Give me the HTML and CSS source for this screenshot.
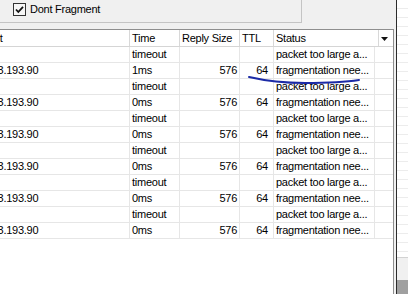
FILE: index.html
```html
<!DOCTYPE html>
<html lang="en">
<head>
    <meta charset="UTF-8">
    <title>Ping</title>
    <link rel="stylesheet" href="styles.css">
</head>
<body>

    <div class="screen">
        <div class="window">

            <!-- Options group -->
            <div class="group">
                <label class="check">
                    <span class="box">
                        <svg width="11" height="11" viewBox="0 0 11 11"><path d="M2 5.5 L4.3 8 L9 2.8" fill="none" stroke="#111" stroke-width="1.8"/></svg>
                    </span>
                    Dont Fragment
                </label>
            </div>

            <!-- Results list -->
            <div class="list">
                <div class="head">
                    <div class="hcell host">Host</div>
                    <div class="hcell">Time</div>
                    <div class="hcell">Reply Size</div>
                    <div class="hcell">TTL</div>
                    <div class="hcell">Status</div>
                    <div class="hcell menu">
                        <svg width="7" height="4" viewBox="0 0 7 4"><polygon points="0,0 7,0 3.5,4" fill="#111"/></svg>
                    </div>
                </div>

                <div class="row"><div class="cell"></div><div class="cell">timeout</div><div class="cell num"></div><div class="cell ttl"></div><div class="cell">packet too large a...</div><div class="cell"></div></div>
                <div class="row"><div class="cell">10.3.193.90</div><div class="cell">1ms</div><div class="cell num">576</div><div class="cell ttl">64</div><div class="cell">fragmentation nee...</div><div class="cell"></div></div>
                <div class="row"><div class="cell"></div><div class="cell">timeout</div><div class="cell num"></div><div class="cell ttl"></div><div class="cell">packet too large a...</div><div class="cell"></div></div>
                <div class="row"><div class="cell">10.3.193.90</div><div class="cell">0ms</div><div class="cell num">576</div><div class="cell ttl">64</div><div class="cell">fragmentation nee...</div><div class="cell"></div></div>
                <div class="row"><div class="cell"></div><div class="cell">timeout</div><div class="cell num"></div><div class="cell ttl"></div><div class="cell">packet too large a...</div><div class="cell"></div></div>
                <div class="row"><div class="cell">10.3.193.90</div><div class="cell">0ms</div><div class="cell num">576</div><div class="cell ttl">64</div><div class="cell">fragmentation nee...</div><div class="cell"></div></div>
                <div class="row"><div class="cell"></div><div class="cell">timeout</div><div class="cell num"></div><div class="cell ttl"></div><div class="cell">packet too large a...</div><div class="cell"></div></div>
                <div class="row"><div class="cell">10.3.193.90</div><div class="cell">0ms</div><div class="cell num">576</div><div class="cell ttl">64</div><div class="cell">fragmentation nee...</div><div class="cell"></div></div>
                <div class="row"><div class="cell"></div><div class="cell">timeout</div><div class="cell num"></div><div class="cell ttl"></div><div class="cell">packet too large a...</div><div class="cell"></div></div>
                <div class="row"><div class="cell">10.3.193.90</div><div class="cell">0ms</div><div class="cell num">576</div><div class="cell ttl">64</div><div class="cell">fragmentation nee...</div><div class="cell"></div></div>
                <div class="row"><div class="cell"></div><div class="cell">timeout</div><div class="cell num"></div><div class="cell ttl"></div><div class="cell">packet too large a...</div><div class="cell"></div></div>
                <div class="row"><div class="cell">10.3.193.90</div><div class="cell">0ms</div><div class="cell num">576</div><div class="cell ttl">64</div><div class="cell">fragmentation nee...</div><div class="cell"></div></div>
            </div>
        </div>

        <!-- Window behind -->
        <div class="side">
            <div class="side-list"></div>
            <div class="side-bar"></div>
            <div class="side-foot"></div>
        </div>

        <!-- Pen mark drawn over the screenshot -->
        <svg class="ink" width="408" height="294" viewBox="0 0 408 294">
            <path d="M249 77 Q 275 83 305 83 Q 340 83 359 80" fill="none" stroke="#1b2aa6" stroke-width="2" stroke-linecap="round"/>
        </svg>
    </div>

</body>
</html>
```

FILE: styles.css
```css
body {
    margin: 0;
    overflow: hidden;
    font-family: "Liberation Sans", Arial, sans-serif;
    font-size: 11px;
    letter-spacing: -0.25px;
    color: #000;
}
.screen {
    position: relative;
    display: flex;
    height: 294px;
    overflow: hidden;
}
.window {
    flex: none;
    box-sizing: border-box;
    width: 421px;
    margin-left: -24px;
    padding-right: 2px;
    display: flex;
    flex-direction: column;
    background-color: #f0f0f0;
    border-right: 1px solid #2b2b2b;
}
.group {
    box-sizing: border-box;
    width: 320px;
    height: 23px;
    margin-left: 6px;
    margin-bottom: 6px;
    padding: 3px 0 0 31px;
    border-right: 1px solid #c4c4c4;
    border-bottom: 1px solid #c4c4c4;
}
.check {
    display: flex;
    align-items: center;
    gap: 4px;
    height: 13px;
    line-height: 13px;
}
.box {
    box-sizing: border-box;
    width: 13px;
    height: 13px;
    display: flex;
    align-items: center;
    justify-content: center;
    border: 1px solid #333;
    background-color: #f6f6f6;
}
.list {
    flex: 1;
    margin-left: 4px;
    background-color: #fff;
    border: 1px solid #8e8e8e;
    border-bottom: none;
}
.head {
    display: grid;
    grid-template-columns: 149px 50px 60px 34px 105px 14px;
    border-bottom: 1px solid #d5d5d5;
}
.hcell {
    height: 16px;
    line-height: 16px;
    padding-left: 2px;
    border-right: 1px solid #d8d8d8;
    white-space: nowrap;
    overflow: hidden;
}
.hcell.host {
    padding-left: 0;
}
.hcell.menu {
    border-right: none;
    display: flex;
    align-items: center;
    padding: 1px 0 0 2px;
    box-sizing: border-box;
}
.row {
    display: grid;
    grid-template-columns: 149px 50px 60px 34px 101px 18px;
    border-bottom: 1px solid #e6e6e6;
}
.cell {
    height: 15px;
    line-height: 15px;
    padding-left: 2px;
    border-right: 1px solid #e6e6e6;
    white-space: nowrap;
    overflow: hidden;
}
.cell:last-child {
    border-right: none;
}
.cell.num {
    text-align: right;
    padding-right: 2px;
}
.cell.ttl {
    text-align: right;
    padding-right: 5px;
}
.side {
    flex: 1;
    display: flex;
    flex-direction: column;
}
.side-list {
    flex: 1;
    background: repeating-linear-gradient(to bottom, #fff 0, #fff 8px, #ececec 8px, #ececec 9px);
}
.side-bar {
    height: 22px;
    background-color: #f0f0f0;
    border-top: 1px solid #d2d2d2;
}
.side-foot {
    height: 14px;
    background-color: #a0a0a0;
}
.ink {
    position: absolute;
    left: 0;
    top: 0;
    pointer-events: none;
}
```
